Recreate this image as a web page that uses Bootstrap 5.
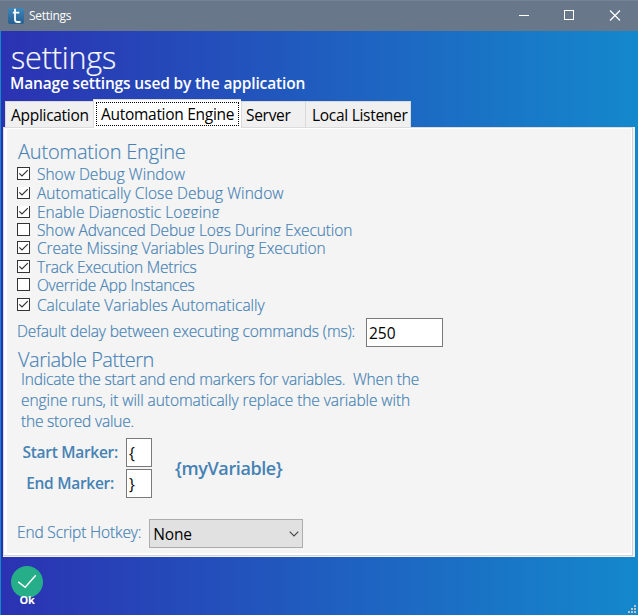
<!DOCTYPE html>
<html lang="en">
<head>
<meta charset="utf-8">
<meta name="viewport" content="width=device-width, initial-scale=1">
<title>Settings</title>
<link href="https://cdn.jsdelivr.net/npm/bootstrap@5.3.0/dist/css/bootstrap.min.css" rel="stylesheet">
<style>
  body { font-family: "Open Sans", "Noto Sans", sans-serif; font-size: 15.5px; overflow: hidden; }
  .app-window { height: 615px; background: linear-gradient(90deg, #1488cc 0 1px, #2b32b2 1px, #1488cc 100%); }
  .title-bar { height: 31px; background: #687789; border-top: 1px solid #748396; padding: 0 17px 0 8px; }
  .title-bar .caption { font-size: 12px; letter-spacing: -.3px; line-height: 16px; margin-left: 5px; }
  .window-buttons { gap: 35px; }
  .app-head { height: 70px; padding: 8px 0 0 11px; }
  .app-head h1 { font-size: 30.5px; font-weight: 300; line-height: 36px; letter-spacing: -.16px; color: #f8f8ff; -webkit-text-stroke: .2px; }
  .app-head p { font-size: 15.5px; font-weight: 600; line-height: 18px; letter-spacing: -.15px; margin: -1px 0 0 -1px; color: #fff; }
  .tab-strip { height: 26px; padding-left: 5px; }
  .tab-strip .nav-link { height: 26px; padding: 0 0 0 5px; border: 1px solid #d9d9d9; border-bottom: 0; border-right: 0; border-radius: 0;
    background: #f0f0f0; color: #000; line-height: 27px; letter-spacing: -.29px; text-align: left; white-space: nowrap; }
  .tab-strip .nav-link:last-child { border-right: 1px solid #d9d9d9; }
  .tab-strip .nav-link.active { height: 29px; margin-top: -2px; padding: 2px 2px 3px; background: #fff; color: #000; border-color: #dcdcdc; position: relative; z-index: 1; }
  .tab-strip .active span { display: block; height: 24px; line-height: 22px; padding-left: 4px; border: 1px dotted #000; }
  .tab-app { width: 88px; } .tab-engine { width: 148px; } .tab-server { width: 64px; } .tab-listener { width: 106px; }
  .tab-server.nav-link { padding-left: 4px; } .tab-listener.nav-link { padding-left: 6px; }
  .page-frame { margin: 0 3px; height: 430px; background: #f0f0f0; padding: 0 2px 1px 0; }
  .page-edge { height: 429px; background: #fff; border: 1px solid #dcdcdc; border-right-color: #d4d4d4; border-bottom-color: #d4d4d4; padding: 1px 1px 2px 3px; }
  .tab-page { height: 100%; background: #f4f4f4; color: #4682b4; padding: 11px 0 0 10px; }
  .tab-page h2 { font-size: 20px; font-weight: 300; line-height: 23px; letter-spacing: -.2px; margin: 0 0 -1px 1px; position: relative; z-index: 4; -webkit-text-stroke: .15px; }
  .tab-page h2.pattern-title { letter-spacing: -.5px; margin: 1px 0 0 1px; }
  .fine { font-weight: 300; letter-spacing: -.15px; -webkit-text-stroke: .2px; }
  .strong-label { font-weight: 600; letter-spacing: -.28px; line-height: 25px; }
  .check-line { height: 25px; line-height: 25px; background: #f4f4f4; width: max-content; position: relative; letter-spacing: 0; }
  .check-line svg { margin: 0 7px 2px 0; flex: none; }
  .up-5 { margin-top: -5px; } .up-6 { margin-top: -6px; } .up-7 { margin-top: -7px; }
  .layer-1 { z-index: 1; } .layer-2 { z-index: 2; } .layer-3 { z-index: 3; }
  .layer-4 { z-index: 4; } .layer-5 { z-index: 5; } .layer-6 { z-index: 6; }
  .loose { letter-spacing: .05px; } .tight { letter-spacing: -.1px; } .tighter { letter-spacing: -.23px; }
  .box-input.form-control { border: 1px solid #7a7a7a; border-radius: 0; background: #fff; color: #000; font-size: 15.5px; line-height: 27px; height: 29px; padding: 0 0 0 2px; box-shadow: none; }
  .delay-row { height: 29px; } .delay-row label { width: 349px; line-height: 27px; }
  .delay-row .box-input { width: 77px; }
  .marker-box.form-control { width: 26px; }
  .note-text { line-height: 21px; margin: -2px 0 0 4px; }
  .note-text span { display: block; }
  .note-a { letter-spacing: -.19px; } .note-b { letter-spacing: -.08px; } .note-c { letter-spacing: -.2px; }
  .markers { margin-top: 6px; }
  .marker-boxes { gap: 2px; }
  .marker-names { width: 109px; gap: 6px; padding-top: 2px; }
  .sample { font-size: 18px; font-weight: 600; letter-spacing: -.4px; line-height: 60px; margin-left: 23px; }
  .hotkey-row { margin-top: 21px; }
  .hotkey-row .fine { line-height: 26px; }
  .combo { width: 154px; height: 29px; margin-left: 8px; padding: 2px 3px 0; background: #e1e1e1; border: 1px solid #adadad; color: #000; letter-spacing: -.2px; }
  .combo svg { margin-bottom: 2px; }
  .foot { height: 58px; padding: 9px 0 0 11px; }
  .ok-btn { width: 32px; height: 48px; position: relative; }
  .ok-btn .ok-text { position: absolute; top: 27px; left: 0; width: 32px; text-align: center; font-size: 11px; font-weight: 700; line-height: 14px; letter-spacing: -.3px; color: #fff; }
  .size-grip { position: absolute; right: 2px; bottom: 2px; }
</style>
</head>
<body>
<svg class="d-none">
  <symbol id="box" viewBox="0 0 13 13"><rect x=".5" y=".5" width="12" height="12" fill="#fff" stroke="#333"/></symbol>
  <symbol id="box-on" viewBox="0 0 13 13"><rect x=".5" y=".5" width="12" height="12" fill="#fff" stroke="#333"/><path d="M2.3 6.3 5 9l5.8-5.8" fill="none" stroke="#333" stroke-width="1.2"/></symbol>
</svg>
<div class="app-window position-relative">
  <header class="title-bar d-flex align-items-center justify-content-between text-white">
    <div class="d-flex align-items-center">
      <svg width="16" height="16" viewBox="0 0 16 16">
        <defs><linearGradient id="logo" x2="0" y2="1"><stop stop-color="#3e87b9"/><stop offset="1" stop-color="#265f92"/></linearGradient></defs>
        <rect width="16" height="16" rx="2" fill="url(#logo)"/>
        <path d="M7 .8V11.5Q7 14 9.5 14H12.5M4.8 4.6H11.3" fill="none" stroke="#fff" stroke-width="1.8"/>
      </svg>
      <span class="caption">Settings</span>
    </div>
    <div class="window-buttons d-flex align-items-center">
      <svg width="11" height="11" viewBox="0 0 11 11"><path d="M0 4.5h10" stroke="#fff"/></svg>
      <svg width="10" height="10" viewBox="0 0 10 10" overflow="visible"><rect x="-.5" y="-.5" width="9" height="9" fill="none" stroke="#fff"/></svg>
      <svg width="11" height="11" viewBox="0 0 11 11" overflow="visible"><path d="m0-.5 10 10m0-10-10 10" stroke="#fff" stroke-width="1.2"/></svg>
    </div>
  </header>

  <div class="app-head">
    <h1 class="m-0">settings</h1>
    <p>Manage settings used by the application</p>
  </div>

  <nav class="nav tab-strip flex-nowrap">
    <a class="nav-link tab-app">Application</a>
    <a class="nav-link active tab-engine"><span>Automation Engine</span></a>
    <a class="nav-link tab-server">Server</a>
    <a class="nav-link tab-listener">Local Listener</a>
  </nav>

  <main class="page-frame">
    <div class="page-edge">
      <div class="tab-page">
        <h2>Automation Engine</h2>
        <div class="check-line fine layer-3 d-flex align-items-center"><svg width="13" height="13"><use href="#box-on"/></svg>Show Debug Window</div>
        <div class="check-line fine loose layer-2 up-6 d-flex align-items-center"><svg width="13" height="13"><use href="#box-on"/></svg>Automatically Close Debug Window</div>
        <div class="check-line fine loose layer-1 up-6 d-flex align-items-center"><svg width="13" height="13"><use href="#box-on"/></svg>Enable Diagnostic Logging</div>
        <div class="check-line fine tight layer-2 up-7 d-flex align-items-center"><svg width="13" height="13"><use href="#box"/></svg>Show Advanced Debug Logs During Execution</div>
        <div class="check-line fine tight layer-3 up-7 d-flex align-items-center"><svg width="13" height="13"><use href="#box-on"/></svg>Create Missing Variables During Execution</div>
        <div class="check-line fine tighter layer-4 up-6 d-flex align-items-center"><svg width="13" height="13"><use href="#box-on"/></svg>Track Execution Metrics</div>
        <div class="check-line fine tighter layer-5 up-7 d-flex align-items-center"><svg width="13" height="13"><use href="#box"/></svg>Override App Instances</div>
        <div class="check-line fine layer-6 up-5 d-flex align-items-center"><svg width="13" height="13"><use href="#box-on"/></svg>Calculate Variables Automatically</div>

        <div class="delay-row d-flex">
          <label class="fine" for="delay">Default delay between executing commands (ms):</label>
          <input id="delay" class="form-control box-input" value="250">
        </div>

        <h2 class="pattern-title">Variable Pattern</h2>
        <p class="note-text fine mb-0"><span class="note-a">Indicate the start and end markers for variables.&nbsp; When the</span><span class="note-b">engine runs, it will automatically replace the variable with</span><span class="note-c">the stored value.</span></p>

        <div class="markers d-flex">
          <div class="marker-names d-flex flex-column align-items-end">
            <span class="strong-label pe-2">Start Marker:</span>
            <span class="strong-label pe-2 me-1">End Marker:</span>
          </div>
          <div class="d-flex flex-column marker-boxes">
            <input class="form-control box-input marker-box" value="{">
            <input class="form-control box-input marker-box" value="}">
          </div>
          <div class="sample">{myVariable}</div>
        </div>

        <div class="hotkey-row d-flex">
          <span class="fine">End Script Hotkey:</span>
          <div class="combo d-flex justify-content-between align-items-center">None
            <svg width="10" height="6" viewBox="0 0 10 6"><path d="m.7.7 4.3 4.3L9.3.7" fill="none" stroke="#444" stroke-width="1.1"/></svg>
          </div>
        </div>
      </div>
    </div>
  </main>

  <footer class="foot">
    <div class="ok-btn">
      <svg class="d-block" width="32" height="32" viewBox="0 0 32 32"><circle cx="16" cy="16" r="16" fill="#26ae88"/><path d="m7.2 15.8 7 5.5L24.800 9.300" fill="none" stroke="#fff" stroke-width="1.5"/></svg>
      <span class="ok-text">Ok</span>
    </div>
    <svg class="size-grip" width="8" height="8" fill="#bfc4c8"><path d="M6 0h2v2H6zM3 3h2v2H3zM6 3h2v2H6zM0 6h2v2H0zM3 6h2v2H3zM6 6h2v2H6z"/></svg>
  </footer>
</div>
<script src="https://cdn.jsdelivr.net/npm/bootstrap@5.3.0/dist/js/bootstrap.bundle.min.js"></script>
</body>
</html>
